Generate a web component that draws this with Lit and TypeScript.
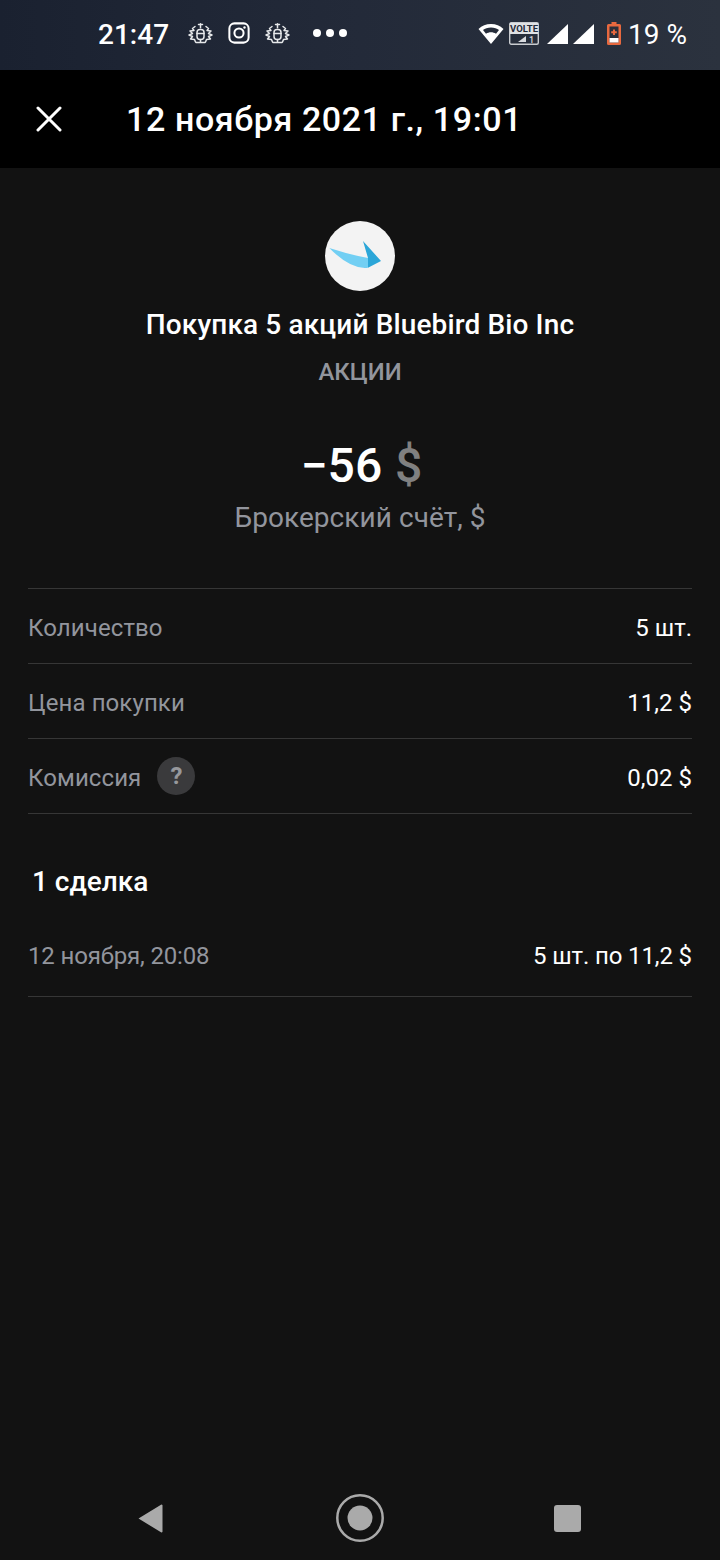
import { LitElement, html, css } from "lit";
import { customElement } from "lit/decorators.js";

const crest = html`<svg class="crest" viewBox="0 0 25 21" fill="none" stroke="#e6e8ea" stroke-width="1.500" stroke-linecap="round" stroke-linejoin="round">
  <rect x="9" y="6.500" width="7" height="10" rx="3"/>
  <path d="M12.500 0.800v4M10.500 1.500h4M8 19.500h9M12.500 16.500v3M9 10.500h7"/>
  <path d="M7 3.500 4.500 5.500 6 7.500 2 8l2.500 2.500L1 12l3.500 1.500L2.500 16l4 .5L7.500 19"/>
  <path d="M18 3.500 20.500 5.500 19 7.500 23 8l-2.500 2.500L24 12l-3.500 1.500L22.500 16l-4 .5L17.500 19"/>
</svg>`;

@customElement("app-root")
export class AppRoot extends LitElement {
  static styles = css`
    :host { display: block; font-family: Roboto, "Liberation Sans", sans-serif; color: #fff; }
    .page { display: flex; flex-direction: column; min-height: 1560px; background: #121212; }
    .status { height: 70px; flex: none; display: flex; align-items: center; padding: 0 33px 0 98px; box-sizing: border-box;
      background: linear-gradient(90deg, #1a2130 0%, #232a39 50%, #2b323e 100%); }
    .time { font-size: 28px; font-weight: 500; line-height: 1; margin-right: 20px; width: 70px; white-space: nowrap; }
    .left { display: flex; align-items: center; gap: 15px; padding-bottom: 4px; }
    .crest { width: 25px; height: 21px; display: block; }
    .ig { width: 22px; height: 22px; display: block; }
    .dots { display: flex; gap: 5px; margin-left: 8px; }
    .dots i { width: 8px; height: 8px; border-radius: 50%; background: #fff; display: block; }
    .right { margin-left: auto; display: flex; align-items: center; padding-bottom: 3px; }
    .wifi { width: 26px; height: 20px; display: block; margin-right: 5px; }
    .volte { width: 30px; height: 23px; display: block; margin-right: 8px; }
    .sig { width: 21px; height: 20px; display: block; margin-right: 5px; }
    .sig.last { margin-right: 13px; }
    .batt { width: 14px; height: 23px; display: block; margin-right: 7px; }
    .pct { font-size: 28px; font-weight: 400; line-height: 1; white-space: nowrap; margin-top: 2px; }
    .bar { height: 98px; flex: none; background: #000; display: flex; align-items: center; padding-left: 36px; box-sizing: border-box; }
    .close { width: 26px; height: 26px; display: block; margin-right: 64px; }
    .bar h1 { margin: 0; font-size: 34px; font-weight: 500; letter-spacing: 0.6px; line-height: 1; white-space: nowrap; }
    .head { display: flex; flex-direction: column; align-items: center; padding-top: 53px; }
    .logo { width: 70px; height: 70px; display: block; }
    .name { font-size: 28px; font-weight: 500; letter-spacing: 0.13px; line-height: 32px; margin-top: 18px; }
    .cat { font-size: 24px; font-weight: 500; line-height: 28px; color: #92959d; margin-top: 17px; }
    .amount { font-size: 48px; font-weight: 500; line-height: 56px; margin: 52px 0 0 3px; word-spacing: 1px; }
    .amount span { color: #808080; }
    .acct { font-size: 28px; line-height: 32px; color: #92959d; margin-top: 8px; letter-spacing: 0.05px; }
    .table { margin: 54px 28px 0; border-top: 1px solid #363636; }
    .row { height: 75px; box-sizing: border-box; border-bottom: 1px solid #363636; display: flex; align-items: center; justify-content: space-between; font-size: 24px; padding-top: 3px; }
    .lab { color: #92959d; display: flex; align-items: center; letter-spacing: 0.1px; }
    .q { width: 38px; height: 38px; border-radius: 50%; background: #3a3a3c; color: #97989c; margin: -3px 0 0 16px; font-size: 24px; font-weight: 700; display: flex; align-items: center; justify-content: center; }
    h2 { margin: 50px 0 0 32px; font-size: 28px; font-weight: 500; line-height: 36px; }
    .deals { margin: 0 28px; }
    .deals .row { height: 97px; padding-top: 15px; letter-spacing: -0.12px; }
    .deals .lab { letter-spacing: -0.15px; }
    .nav { margin-top: auto; height: 84px; flex: none; display: flex; align-items: center; box-sizing: border-box; }
    .nav svg { display: block; }
    .back { width: 25px; height: 29px; margin-left: 138px; }
    .home { width: 48px; height: 48px; margin-left: 173px; }
    .recent { width: 27px; height: 27px; margin-left: 170px; }
  `;

  render() {
    return html`<div class="page">
      <div class="status">
        <span class="time">21:47</span>
        <div class="left">
          ${crest}
          <svg class="ig" viewBox="0 0 24 24" fill="none" stroke="#fff" stroke-width="2.200"><rect x="1.500" y="1.500" width="21" height="21" rx="5.500"/><circle cx="12" cy="12" r="5"/><circle cx="18" cy="6" r="1.300" fill="#fff" stroke="none"/></svg>
          ${crest}
          <div class="dots"><i></i><i></i><i></i></div>
        </div>
        <div class="right">
          <svg class="wifi" viewBox="0 0 26 20"><path fill="#fff" fill-rule="evenodd" d="M13 0C8 0 4 1.800 0.500 5L13 20 25.500 5C22 1.800 18 0 13 0ZM13 3.500c3.300 0 6 1 8 2.500L18 9.800C16.500 8.800 14.800 8.300 13 8.300s-3.500.5-5 1.500L5 6C7 4.500 9.700 3.500 13 3.500Z"/></svg>
          <svg class="volte" viewBox="0 0 30 23"><rect x="0.700" y="0.700" width="28.600" height="21.600" rx="1.500" fill="none" stroke="#c9ccd0" stroke-width="1.400"/><rect x="1" y="1" width="28" height="11" fill="#dfe1e4"/><text x="15" y="10" font-family="Roboto" font-size="9.500" font-weight="700" text-anchor="middle" fill="#252b38">VOLTE</text><path d="M9 20l8-6v6Z" fill="#d8dade"/><text x="20" y="20.500" font-family="Roboto" font-size="9" fill="#d8dade" font-weight="500">1</text></svg>
          <svg class="sig" viewBox="0 0 21 20"><path d="M0 20 21 0v20Z" fill="#fff"/></svg>
          <svg class="sig last" viewBox="0 0 21 20"><path d="M0 20 21 0v20Z" fill="#fff"/></svg>
          <svg class="batt" viewBox="0 0 14 23"><path d="M4.500 0h5v2h3A1.500 1.500 0 0 1 14 3.500v18a1.500 1.500 0 0 1-1.500 1.500h-11A1.500 1.500 0 0 1 0 21.500v-18A1.500 1.500 0 0 1 1.500 2h3Z" fill="#e8693f"/><rect x="2.500" y="4.500" width="9" height="16" fill="#2a2f3a"/><rect x="2.500" y="16" width="9" height="4.500" fill="#fff"/><path d="M7 7.500v5.500M4.200 10.200h5.600" stroke="#e8693f" stroke-width="2"/></svg>
          <span class="pct">19 %</span>
        </div>
      </div>
      <div class="bar">
        <svg class="close" viewBox="0 0 26 26" stroke="#fff" stroke-width="3" stroke-linecap="round"><path d="M2 2l22 22M24 2 2 24"/></svg>
        <h1>12 ноября 2021 г., 19:01</h1>
      </div>
      <div class="head">
        <svg class="logo" viewBox="0 0 70 70">
          <circle cx="35" cy="35" r="35" fill="#f3f3f3"/>
          <path d="M4.300 27Q26 34 43 37L43 46.700Q26 49 4.300 27Z" fill="#72cff3"/>
          <path d="M38 20 56 40 43 46.700 43 37Z" fill="#2ba6d8"/>
        </svg>
        <div class="name">Покупка 5 акций Bluebird Bio Inc</div>
        <div class="cat">АКЦИИ</div>
        <div class="amount">−56 <span>$</span></div>
        <div class="acct">Брокерский счёт, $</div>
      </div>
      <div class="table">
        <div class="row"><span class="lab">Количество</span><span>5 шт.</span></div>
        <div class="row"><span class="lab">Цена покупки</span><span>11,2 $</span></div>
        <div class="row"><span class="lab">Комиссия<span class="q">?</span></span><span>0,02 $</span></div>
      </div>
      <h2>1 сделка</h2>
      <div class="deals">
        <div class="row"><span class="lab">12 ноября, 20:08</span><span>5 шт. по 11,2 $</span></div>
      </div>
      <div class="nav">
        <svg class="back" viewBox="0 0 25 29"><path d="M0.500 14.500 23 0.700a1 1 0 0 1 1.500 1v25.600a1 1 0 0 1-1.500 1Z" fill="#aaa"/></svg>
        <svg class="home" viewBox="0 0 48 48"><circle cx="24" cy="24" r="22.700" fill="none" stroke="#aaa" stroke-width="2.500"/><circle cx="24" cy="24" r="12.500" fill="#aaa"/></svg>
        <svg class="recent" viewBox="0 0 27 27"><rect width="27" height="27" rx="3" fill="#aaa"/></svg>
      </div>
    </div>`;
  }
}
